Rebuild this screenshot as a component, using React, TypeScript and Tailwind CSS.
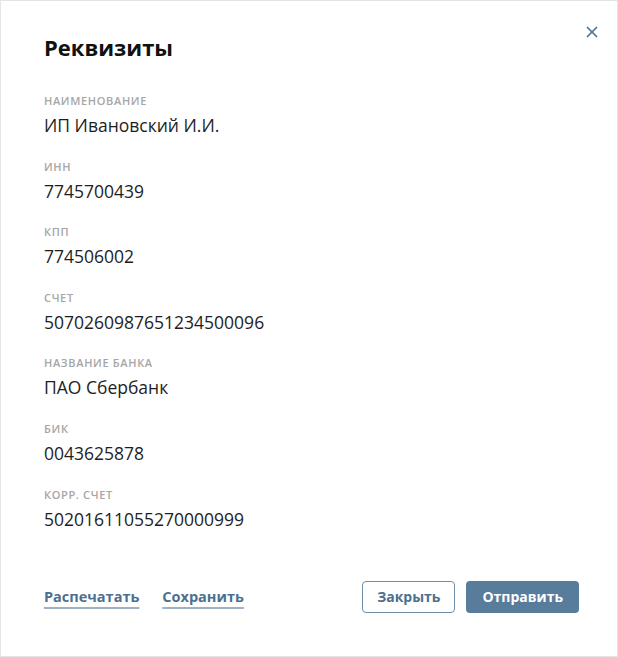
import { X } from "lucide-react";

const fields = [
  { label: "Наименование", value: "ИП Ивановский И.И." },
  { label: "ИНН", value: "7745700439" },
  { label: "КПП", value: "774506002" },
  { label: "Счет", value: "5070260987651234500096" },
  { label: "Название банка", value: "ПАО Сбербанк" },
  { label: "БИК", value: "0043625878" },
  { label: "Корр. счет", value: "50201611055270000999" },
];

const App: React.FC = () => {
  return (
    <div
      className="w-[618px] h-[657px] bg-white border border-[#e4e4e4] relative flex flex-col"
      style={{ fontFamily: '"Open Sans", "Noto Sans", sans-serif' }}
    >
      <button className="absolute top-[22px] right-[16px] text-[#4a7092]" aria-label="Закрыть">
        <X size={18} strokeWidth={2.2} />
      </button>

      <div className="px-[43px] pt-[31px]">
        <h2 className="text-[22px] leading-[30px] font-bold text-[#111]">Реквизиты</h2>

        <div className="mt-[31px] flex flex-col gap-[21.6px]">
          {fields.map((f, i) => (
            <div key={i}>
              <p className="text-[11px] leading-[16px] font-semibold uppercase tracking-[0.06em] text-[#a6a6a6]">
                {f.label}
              </p>
              <p className="mt-[4px] text-[17.5px] leading-[24px] text-[#1e1e1e]">{f.value}</p>
            </div>
          ))}
        </div>
      </div>

      <div className="mt-[50px] pl-[43px] pr-[38px] flex items-center justify-between">
        <div className="flex items-center gap-[23px]">
          <a className="text-[14.5px] font-bold text-[#4d7090] underline decoration-2 underline-offset-[5px] decoration-[#9db2c5] cursor-pointer">
            Распечатать
          </a>
          <a className="text-[14.5px] font-bold text-[#4d7090] underline decoration-2 underline-offset-[5px] decoration-[#9db2c5] cursor-pointer">
            Сохранить
          </a>
        </div>
        <div className="flex items-center gap-[11px]">
          <button className="h-[32px] px-[14px] rounded-[4px] border border-[#6f8ea9] text-[14px] font-bold text-[#4d7090] bg-white">
            Закрыть
          </button>
          <button className="h-[32px] px-[16px] rounded-[4px] bg-[#587c9b] text-[14px] font-bold text-white">
            Отправить
          </button>
        </div>
      </div>
    </div>
  );
};

export default App;
